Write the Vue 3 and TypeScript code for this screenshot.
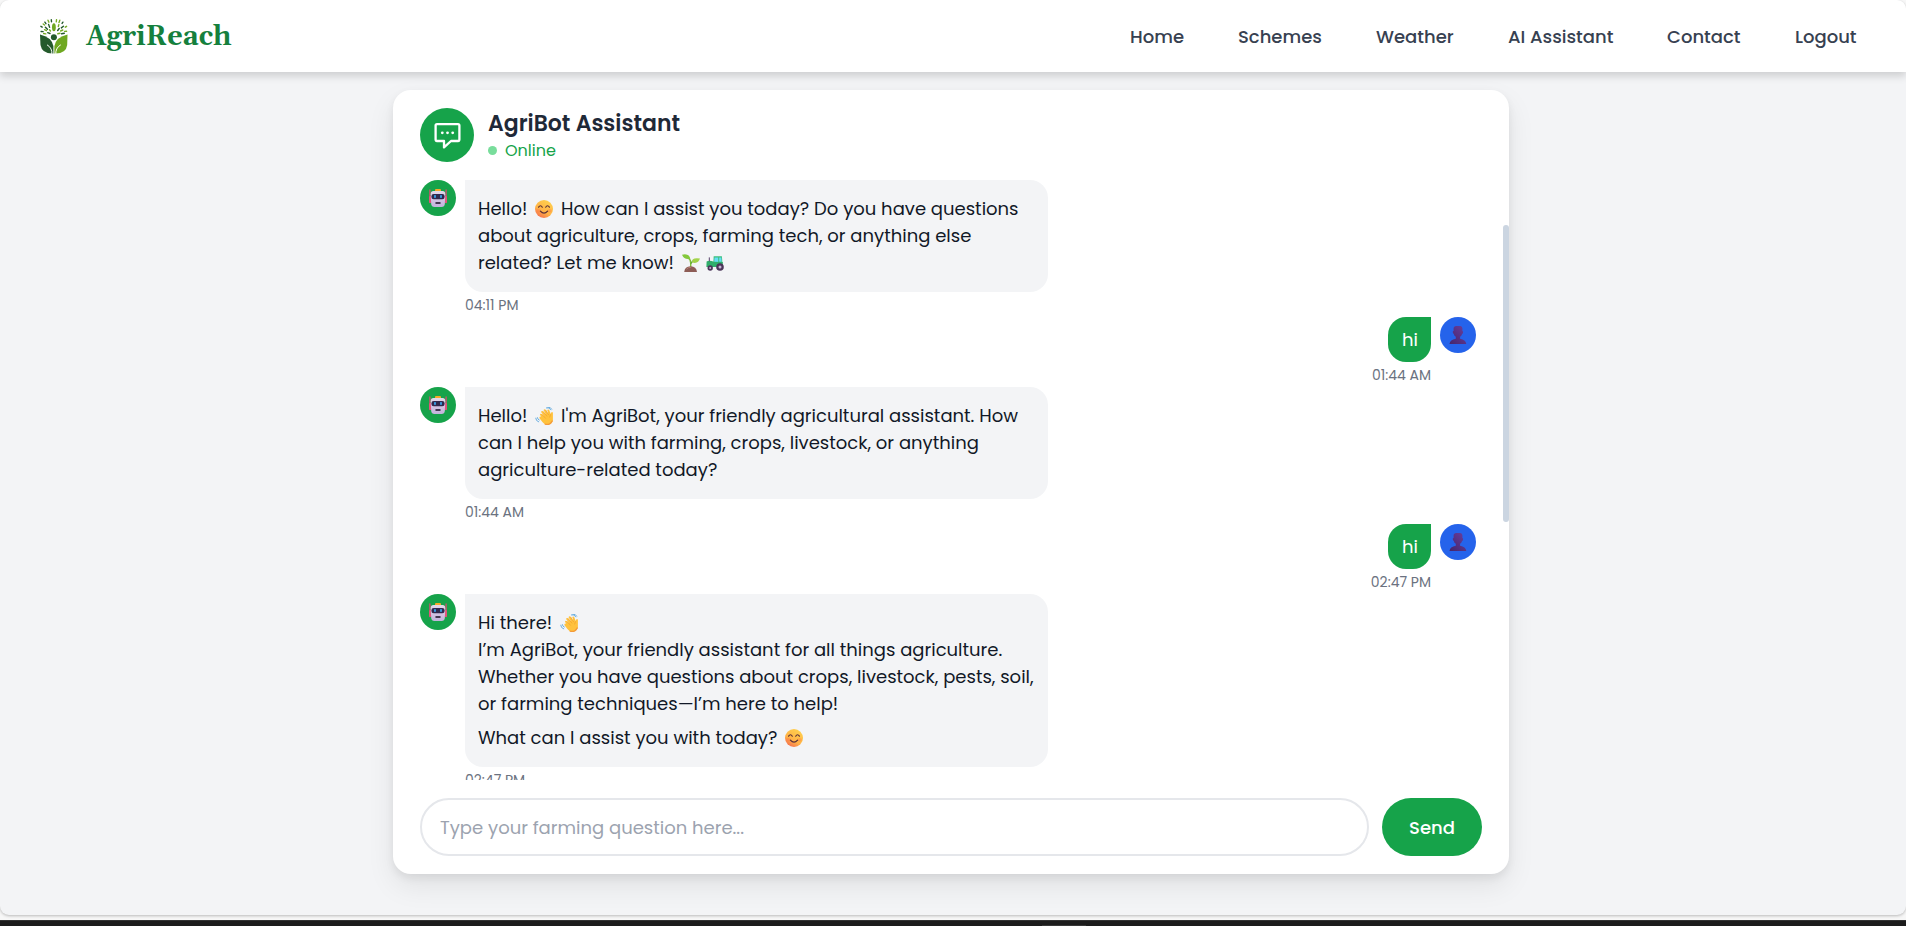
<script setup lang="ts">
import { ref } from 'vue'

type EmojiName = 'smile' | 'wave' | 'seedling' | 'tractor'
type Part = string | { emoji: EmojiName }

interface Message {
  id: number
  from: 'bot' | 'user'
  time: string
  paragraphs: Part[][][]
}

const links: string[] = ['Home', 'Schemes', 'Weather', 'AI Assistant', 'Contact', 'Logout']
const draft = ref<string>('')

const e = (emoji: EmojiName): Part => ({ emoji })

// message -> paragraphs -> lines -> parts
const messages: Message[] = [
  {
    id: 1,
    from: 'bot',
    time: '04:11 PM',
    paragraphs: [[
      ['Hello! ', e('smile'), ' How can I assist you today? Do you have questions'],
      ['about agriculture, crops, farming tech, or anything else'],
      ['related? Let me know! ', e('seedling'), e('tractor')],
    ]],
  },
  { id: 2, from: 'user', time: '01:44 AM', paragraphs: [[['hi']]] },
  {
    id: 3,
    from: 'bot',
    time: '01:44 AM',
    paragraphs: [[
      ['Hello! ', e('wave'), " I'm AgriBot, your friendly agricultural assistant. How"],
      ['can I help you with farming, crops, livestock, or anything'],
      ['agriculture-related today?'],
    ]],
  },
  { id: 4, from: 'user', time: '02:47 PM', paragraphs: [[['hi']]] },
  {
    id: 5,
    from: 'bot',
    time: '02:47 PM',
    paragraphs: [
      [
        ['Hi there! ', e('wave')],
        ['I’m AgriBot, your friendly assistant for all things agriculture.'],
        ['Whether you have questions about crops, livestock, pests, soil,'],
        ['or farming techniques—I’m here to help!'],
      ],
      [['What can I assist you with today? ', e('smile')]],
    ],
  },
]
</script>

<template>
  <svg class="defs" width="0" height="0" aria-hidden="true">
    <defs>
      <linearGradient id="gFace" x1="0.8" y1="0" x2="0.2" y2="1">
        <stop offset="0" stop-color="#ffd24d" /><stop offset="0.6" stop-color="#ffb347" /><stop offset="1" stop-color="#f4694f" />
      </linearGradient>
      <linearGradient id="gBot" x1="0" y1="0" x2="0" y2="1">
        <stop offset="0" stop-color="#e3d8ea" /><stop offset="1" stop-color="#c3b2dc" />
      </linearGradient>
      <linearGradient id="gBust" x1="1" y1="0" x2="0" y2="1">
        <stop offset="0" stop-color="#6b3fa0" /><stop offset="1" stop-color="#43256b" />
      </linearGradient>
      <symbol id="smile" viewBox="0 0 18 18">
        <circle cx="9" cy="9" r="9" fill="url(#gFace)" />
        <ellipse cx="3.4" cy="10.8" rx="2.2" ry="1.8" fill="#ff6b4a" opacity="0.3" />
        <ellipse cx="14.6" cy="10.8" rx="2.2" ry="1.8" fill="#ff6b4a" opacity="0.3" />
        <path d="M3.6 7.2Q5.5 4.3 7.3 7.2M10.7 7.2Q12.5 4.3 14.4 7.2M5.4 11.2Q9 15.2 12.6 11.2" fill="none" stroke="#5a3038" stroke-width="1.2" stroke-linecap="round" />
      </symbol>
      <symbol id="wave" viewBox="0 0 18 18">
        <path d="M6.3 9.7 4.9 7.7Q5.2 6.2 6.7 6.9L9 9 6.1 5.1Q6.3 3.5 8 4.3L11 7.5 8.6 3.2Q9.1 1.7 10.6 2.7L13.3 6.8 12.3 3Q13.2 1.8 14.2 3L15.7 7 16.2 5.4Q17.6 4.5 17.9 6V13.5Q16.5 17.8 12.6 17.8 9 17.5 7.4 15L4.3 10.9Q4.6 9.2 6.3 9.7Z" fill="#ffc23d" />
        <path d="m6.7 7 4 4.5M8.1 4.4l4 5M10.7 2.9l3 5.2M15.6 7.4l-1 3" fill="none" stroke="#ee9b28" stroke-width="0.6" />
        <path d="M9.7 17q5 2 7.8-3.5" fill="none" stroke="#f39a3c" stroke-width="1.3" />
        <path d="M11.4.8q2.8-.9 4.4 2M12.6 0q3.2-.1 4.2 2.2M.7 11.2q.2 2.9 3 3.7M2.3 10.6q.3 2 2 2.5" fill="none" stroke="#5ba6dc" stroke-width="0.9" stroke-linecap="round" />
      </symbol>
      <symbol id="seedling" viewBox="0 0 18 18">
        <path d="M8.7 13V9Q8.5 5.5 6.4 4.2" fill="none" stroke="#7fbe37" stroke-width="1.4" />
        <path d="M8.8 10Q9.3 7.6 12 6.6" fill="none" stroke="#5fa936" stroke-width="1.2" />
        <path d="M0 .7Q6.8-1 8.4 4.7 2.4 6.3 0 .7Z" fill="#83c83b" />
        <path d="M10 8.4Q9.3 3.3 18 4.6 16.3 10.3 10 8.4Z" fill="#a2d34a" />
        <path d="M2.2 18Q2.7 12.3 8.6 12.2 14.4 12.3 15 18Z" fill="#8d5c56" />
        <path d="M4.5 15.2Q6.4 13 9.2 13.2" fill="none" stroke="#b58073" stroke-width="1" />
      </symbol>
      <symbol id="tractor" viewBox="0 0 18 18">
        <path d="M7.7 2.2h8.2l.5 7H7.3Z" fill="#3dbf7c" />
        <path d="M8.6 3.4h3.6v5H8.1ZM13.2 3.4h2.1l.3 4.4h-2.4Z" fill="#63ddf5" />
        <path d="M.6 7.4Q3.5 5.7 8 7.8L16.8 8V13H.4Z" fill="#2fae6b" />
        <path d="M3.3 3.4v4" stroke="#56406a" stroke-width="1" />
        <circle cx="4.2" cy="14" r="2.7" fill="#4b3559" /><circle cx="4.2" cy="14" r="1" fill="#c6b4d6" />
        <circle cx="14" cy="13" r="3.8" fill="#4b3559" /><circle cx="14" cy="13" r="1.5" fill="#c6b4d6" />
      </symbol>
      <symbol id="robot" viewBox="0 0 18 18">
        <path d="M.9 1v12.6M17.1 1v12.6" stroke="#d64a72" stroke-width="1.3" stroke-linecap="round" />
        <rect x="0" y="7" width="3" height="7" rx="1.2" fill="#e0557c" /><rect x="15" y="7" width="3" height="7" rx="1.2" fill="#e0557c" />
        <rect x="6" y="0" width="6" height="3.5" rx="1" fill="#f7a928" />
        <path d="M4.5 2.1H13.5Q16.3 2.2 16.3 5.3L15.8 15Q15.5 18 12.6 18H5.4Q2.5 18 2.2 15L1.7 5.3Q1.7 2.2 4.5 2.1Z" fill="url(#gBot)" />
        <rect x="2.4" y="5" width="13.2" height="5.2" rx="2.3" fill="#30294e" />
        <rect x="5.1" y="6" width="1.8" height="3" rx="0.7" fill="#38a3ea" /><rect x="11.1" y="6" width="1.8" height="3" rx="0.7" fill="#38a3ea" />
        <rect x="6.3" y="13" width="5.4" height="2.1" rx="0.8" fill="#443752" />
      </symbol>
      <symbol id="bust" viewBox="0 0 18 18">
        <path d="M.5 18Q1 13.5 6.8 12.7V10.8Q5.2 9.7 4.8 7.9 3.5 7.5 3.8 5.3L4.6 5V1.8Q5.4 0 7 0h4.3q2.1.2 2.1 2.2V5l.7.4q.2 2-1 2.5-.6 2-2 2.9v1.9q5.6.8 6.2 5.3Z" fill="url(#gBust)" />
      </symbol>
    </defs>
  </svg>

  <div class="screen">
    <div class="page">
      <header class="nav">
        <a class="brand" href="#">
          <svg class="logo" viewBox="0 0 28 36" aria-hidden="true">
            <path d="M0 15.5Q11.5 18 13.4 27V34.5Q2 35 .5 26Z" fill="#245a2c" />
            <path d="M27.5 15.5Q16 18 14.4 27V34.5Q26 35 27.2 26Z" fill="#6fa821" />
            <path d="M11.8 36Q12.6 29 7 25.8M15.8 36Q15.2 29 20.8 25.8" fill="none" stroke="#fff" stroke-width="1" />
            <circle cx="13.9" cy="18.3" r="3" fill="#245a2c" />
            <ellipse cx="13.9" cy="8.2" rx="1.9" ry="4" fill="#6fa821" />
            <g fill="none" stroke-width="1.4" stroke-linecap="round">
              <path d="M11.3.8l.2 2M4.9 3.2l1 1.5M8.6 5.4l1 3M5.4 8.2l2 2.1M.9 7.3l1.3.8M1.1 12.5l2 .1M7.7 13.7l2.3.8M19.2 9.5l-1.5 2M23.4 7.3l-2 1.6M22.9 3.2l-.8 1.2M24.3 14.3l-2.7.5" stroke="#245a2c" />
              <path d="M16.5.8l-.2 2M8 1.2l.9 2M19.8 1.2l-.8 2.4M18.8 5.6l-.5 1.9M3.2 5l1.3 1M4.5 10.7l2 .9M9.5 10.8l1 1.2M26.6 7.3l-1.3.9M26.6 12.2l-2 .2M22.8 11l-2.2 1M20 14.3l-2.2.5M3.6 14.5l2.2.4" stroke="#76ad25" />
            </g>
          </svg>
          <span>AgriReach</span>
        </a>
        <nav class="links" aria-label="Main">
          <a v-for="link in links" :key="link" href="#">{{ link }}</a>
        </nav>
      </header>

      <main class="main">
        <section class="card">
          <div class="head">
            <div class="badge">
              <svg width="27" height="27" viewBox="0 0 27 27" aria-hidden="true">
                <path d="M3 2.2H24Q25.4 2.2 25.4 3.6V17.6Q25.4 19 24 19H17L10 25.4V19H3Q1.6 19 1.6 17.6V3.6Q1.6 2.2 3 2.2Z" fill="none" stroke="#fff" stroke-width="2.3" stroke-linejoin="round" />
                <circle cx="8.3" cy="10.8" r="1.4" fill="#fff" /><circle cx="13.5" cy="10.8" r="1.4" fill="#fff" /><circle cx="18.7" cy="10.8" r="1.4" fill="#fff" />
              </svg>
            </div>
            <div>
              <h1>AgriBot Assistant</h1>
              <p class="status"><span class="dot"></span>Online</p>
            </div>
          </div>

          <div class="feed">
            <article v-for="m in messages" :key="m.id" class="row" :class="m.from">
              <div class="avatar">
                <svg width="18" height="18" aria-hidden="true"><use :href="m.from === 'bot' ? '#robot' : '#bust'" /></svg>
              </div>
              <div class="body">
                <div class="bubble">
                  <p v-for="(para, pi) in m.paragraphs" :key="pi">
                    <span v-for="(line, li) in para" :key="li" class="line">
                      <template v-for="(part, i) in line" :key="i">
                        <template v-if="typeof part === 'string'">{{ part }}</template>
                        <svg v-else class="emoji" width="18" height="18" aria-hidden="true"><use :href="'#' + part.emoji" /></svg>
                      </template>
                    </span>
                  </p>
                </div>
                <time>{{ m.time }}</time>
              </div>
            </article>
            <div class="thumb"></div>
          </div>

          <form class="composer" @submit.prevent="draft = ''">
            <input v-model="draft" type="text" placeholder="Type your farming question here..." aria-label="Your farming question" />
            <button type="submit">Send</button>
          </form>
        </section>
      </main>
    </div>
    <div class="taskbar"><span></span></div>
  </div>
</template>

<style>
body {
  margin: 0;
  background: #f7f7f7;
}
</style>

<style scoped>
.defs {
  position: absolute;
}
.screen {
  display: flex;
  flex-direction: column;
  height: 100vh;
  box-sizing: border-box;
  overflow: hidden;
  font-family: Poppins, Inter, "Open Sans", sans-serif;
  font-size: 18px;
  line-height: 27px;
  color: #111827;
}
.page {
  flex: 1;
  min-height: 0;
  display: flex;
  flex-direction: column;
  margin-bottom: 5px;
  background: #f3f4f6;
  border-radius: 9px;
  overflow: hidden;
  box-shadow: 0 1px 3px rgba(0, 0, 0, 0.25);
}
.nav {
  display: flex;
  justify-content: space-between;
  align-items: center;
  height: 72px;
  flex: none;
  padding: 0 49px 0 40px;
  background: #fff;
  box-shadow: 0 4px 8px rgba(0, 0, 0, 0.16);
  z-index: 1;
}
.brand {
  display: flex;
  align-items: center;
  gap: 18px;
  padding-top: 2px;
  font-family: Gelasio, Georgia, "Liberation Serif", serif;
  font-size: 27px;
  line-height: 36px;
  font-weight: 700;
  color: #15803d;
  text-decoration: none;
}
.logo {
  width: 28px;
  height: 36px;
}
.links {
  display: grid;
  grid-template-columns: 54px 84px 78px 105px 74px 62px;
  column-gap: 54px;
}
.links a {
  font-weight: 500;
  color: #374151;
  text-decoration: none;
  white-space: nowrap;
}
.main {
  flex: 1;
  min-height: 0;
  display: flex;
  justify-content: center;
  padding: 18px 22px 41px 18px;
}
.card {
  display: flex;
  flex-direction: column;
  width: 100%;
  max-width: 1116px;
  background: #fff;
  border-radius: 18px;
  box-shadow: 0 12px 28px rgba(0, 0, 0, 0.08), 0 4px 8px rgba(0, 0, 0, 0.07);
}
.head {
  display: flex;
  gap: 14px;
  align-items: center;
  padding: 18px 27px;
}
.badge {
  display: flex;
  align-items: center;
  justify-content: center;
  width: 54px;
  height: 54px;
  border-radius: 50%;
  background: #16a34a;
}
h1 {
  margin: 0;
  font-size: 22px;
  line-height: 31px;
  font-weight: 600;
  color: #1f2937;
}
p {
  margin: 0;
}
.status {
  display: flex;
  align-items: center;
  gap: 8px;
  font-size: 16px;
  line-height: 23px;
  color: #16a34a;
}
.dot {
  width: 9px;
  height: 9px;
  border-radius: 50%;
  background: #78dd9b;
}
.feed {
  position: relative;
  flex: 1;
  min-height: 0;
  overflow: hidden;
  padding: 0 33px 0 27px;
}
.thumb {
  position: absolute;
  top: 45px;
  right: 0;
  width: 6px;
  height: 297px;
  border-radius: 3px;
  background: #cbd5e1;
}
.row {
  display: flex;
  gap: 9px;
  align-items: flex-start;
}
.row.user {
  flex-direction: row-reverse;
}
.avatar {
  flex: none;
  display: flex;
  align-items: center;
  justify-content: center;
  width: 36px;
  height: 36px;
  border-radius: 50%;
  background: #16a34a;
}
.user .avatar {
  background: #2563eb;
}
.body {
  display: flex;
  flex-direction: column;
}
.bot .body {
  width: 100%;
  max-width: 583px;
}
.user .body {
  align-items: flex-end;
}
.bubble {
  padding: 15px 13px 16px;
  border-radius: 0 18px 18px 18px;
  background: #f3f4f6;
}
.user .bubble {
  padding: 9px 13px 9px 14px;
  border-radius: 18px 0 18px 18px;
  background: #16a34a;
  color: #fff;
}
.bubble p + p {
  margin-top: 7px;
}
.line {
  display: block;
}
.emoji {
  margin: 0 3px;
  vertical-align: -3px;
}
time {
  font-size: 14px;
  line-height: 24px;
  color: #6b7280;
}
.user time,
.bot time {
  padding-top: 1px;
}
.composer {
  display: flex;
  gap: 13px;
  padding: 18px 27px;
}
.composer input {
  flex: 1;
  min-width: 0;
  height: 58px;
  box-sizing: border-box;
  padding: 0 18px;
  border: 2px solid #e5e7eb;
  border-radius: 29px;
  background: #fff;
  font: inherit;
  color: inherit;
  outline: none;
}
.composer input::placeholder {
  color: #9ca3af;
  opacity: 1;
}
.composer button {
  width: 100px;
  height: 58px;
  border: 0;
  border-radius: 29px;
  background: #16a34a;
  color: #fff;
  font: inherit;
  font-weight: 500;
}
.taskbar {
  display: flex;
  justify-content: center;
  align-items: flex-end;
  height: 6px;
  flex: none;
  box-sizing: border-box;
  padding-left: 222px;
  border-top: 1px solid #333;
  background: #1c1c1c;
}
.taskbar span {
  width: 44px;
  height: 1px;
  background: #383838;
}
</style>
